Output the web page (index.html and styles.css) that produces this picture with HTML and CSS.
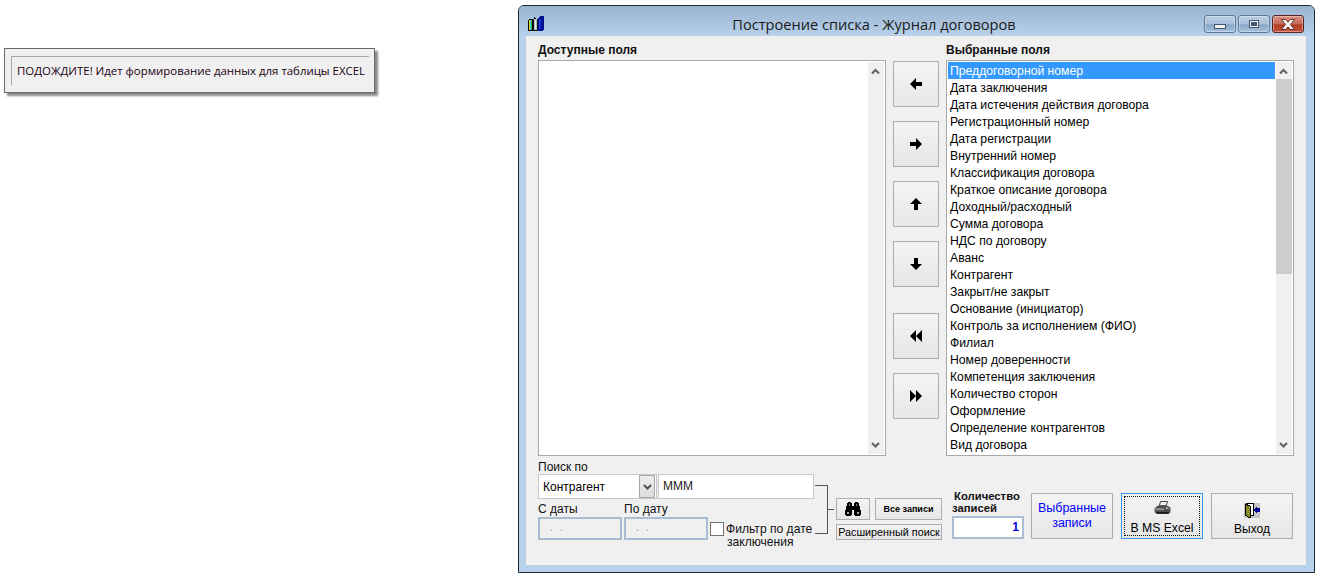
FILE: index.html
```html
<!DOCTYPE html>
<html lang="ru">
<head>
<meta charset="utf-8">
<title>Построение списка</title>
<link rel="stylesheet" href="styles.css">
</head>
<body>
<div class="toast">
  <div class="toast-inner">ПОДОЖДИТЕ! Идет формирование данных для таблицы EXCEL</div>
</div>

<div class="window">
  <div class="titlebar">
    <svg class="app-icon" width="16" height="16" viewBox="0 0 16 16" shape-rendering="crispEdges">
      <path d="M0 4h1V3h4v12H0z" fill="#000"/>
      <rect x="1" y="4" width="1" height="10" fill="#e8e020"/>
      <rect x="2" y="4" width="1" height="10" fill="#30d0e0"/>
      <rect x="3" y="4" width="1" height="10" fill="#40b050"/>
      <path d="M5 3h1V1h1v1h1v1h2v12H5z" fill="#101820"/>
      <rect x="6" y="3" width="3" height="11" fill="#a8b8b8"/>
      <rect x="7" y="4" width="1" height="9" fill="#e8f0f0"/>
      <path d="M10 3l2-3h4v13l-2 2h-4z" fill="#001090"/>
      <rect x="11" y="3" width="2" height="10" fill="#1030d8"/>
    </svg>
    <div class="title">Построение списка - Журнал договоров</div>
    <div class="caption-btns">
      <div class="cap cap-min"><span class="glyph-min"></span></div>
      <div class="cap cap-max"><span class="glyph-max"></span></div>
      <div class="cap cap-close">
        <svg width="16" height="11" viewBox="0 0 16 11"><path d="M1.500.5h4L8 3l2.500-2.500h4L10.500 5.500l4 5h-4L8 8l-2.500 2.500h-4l4-5z" fill="#f4f4f4" stroke="#60302a" stroke-width="1"/></svg>
      </div>
    </div>
  </div>

  <div class="client">
    <div class="lists">
      <div class="col">
        <div class="head">Доступные поля</div>
        <div class="listbox">
          <div class="items"></div>
          <div class="vscroll">
            <svg class="sb-arrow" width="16" height="17" viewBox="0 0 16 17"><path d="M4 11.500 7.500 8l3.500 3.500" fill="none" stroke="#606060" stroke-width="2"/></svg>
            <div class="sb-track"></div>
            <svg class="sb-arrow" width="16" height="17" viewBox="0 0 16 17"><path d="M4 6l3.500 3.500L11 6" fill="none" stroke="#606060" stroke-width="2"/></svg>
          </div>
        </div>
      </div>

      <div class="movers">
        <div class="mv-group">
          <button class="btn mv"><svg width="12" height="12" viewBox="0 0 12 12"><path d="M0 6l6-6v4h6v4H6v4z"/></svg></button>
          <button class="btn mv"><svg width="12" height="12" viewBox="0 0 12 12"><path d="M12 6 6 0v4H0v4h6v4z"/></svg></button>
          <button class="btn mv"><svg width="12" height="12" viewBox="0 0 12 12"><path d="M6 0l6 6H8v6H4V6H0z"/></svg></button>
          <button class="btn mv"><svg width="12" height="12" viewBox="0 0 12 12"><path d="M6 12l6-6H8V0H4v6H0z"/></svg></button>
        </div>
        <div class="mv-group">
          <button class="btn mv"><svg width="12" height="12" viewBox="0 0 12 12"><path d="M0 6l6-6v12zM6 6l6-6v12z"/></svg></button>
          <button class="btn mv"><svg width="12" height="12" viewBox="0 0 12 12"><path d="M6 6 0 0v12zM12 6 6 0v12z"/></svg></button>
        </div>
      </div>

      <div class="col">
        <div class="head">Выбранные поля</div>
        <div class="listbox">
          <div class="items">
            <div class="item sel">Преддоговорной номер</div>
            <div class="item">Дата заключения</div>
            <div class="item">Дата истечения действия договора</div>
            <div class="item">Регистрационный номер</div>
            <div class="item">Дата регистрации</div>
            <div class="item">Внутренний номер</div>
            <div class="item">Классификация договора</div>
            <div class="item">Краткое описание договора</div>
            <div class="item">Доходный/расходный</div>
            <div class="item">Сумма договора</div>
            <div class="item">НДС по договору</div>
            <div class="item">Аванс</div>
            <div class="item">Контрагент</div>
            <div class="item">Закрыт/не закрыт</div>
            <div class="item">Основание (инициатор)</div>
            <div class="item">Контроль за исполнением (ФИО)</div>
            <div class="item">Филиал</div>
            <div class="item">Номер доверенности</div>
            <div class="item">Компетенция заключения</div>
            <div class="item">Количество сторон</div>
            <div class="item">Оформление</div>
            <div class="item">Определение контрагентов</div>
            <div class="item">Вид договора</div>
          </div>
          <div class="vscroll">
            <svg class="sb-arrow" width="16" height="17" viewBox="0 0 16 17"><path d="M4 11.500 7.500 8l3.500 3.500" fill="none" stroke="#606060" stroke-width="2"/></svg>
            <div class="sb-track"><div class="sb-thumb"></div></div>
            <svg class="sb-arrow" width="16" height="17" viewBox="0 0 16 17"><path d="M4 6l3.500 3.500L11 6" fill="none" stroke="#606060" stroke-width="2"/></svg>
          </div>
        </div>
      </div>
    </div>

    <div class="bottom">
      <div class="search">
        <div class="lbl lbl-search">Поиск по</div>
        <div class="search-row">
          <div class="combo">
            <span class="combo-text">Контрагент</span>
            <span class="combo-btn"><svg width="9" height="6" viewBox="0 0 9 6"><path d="M1 1l3.500 3.500L8 1" fill="none" stroke="#505050" stroke-width="2"/></svg></span>
          </div>
          <div class="field">МММ</div>
        </div>
        <div class="date-row">
          <div class="date-col">
            <div class="lbl">С даты</div>
            <div class="date-box">. .</div>
          </div>
          <div class="date-col">
            <div class="lbl">По дату</div>
            <div class="date-box">. .</div>
          </div>
          <div class="filter">
            <span class="check"></span>
            <span class="filter-text">Фильтр по дате<br><span class="filter-l2">заключения</span></span>
          </div>
        </div>
      </div>

      <div class="bracket"></div>

      <div class="find">
        <div class="find-top">
          <button class="btn btn-bino">
            <svg width="16" height="14" viewBox="0 0 16 14" shape-rendering="crispEdges"><path d="M3 0h3v1h1v3h2V1h1V0h3v1h1v3h1v4h1v5h-1v1h-5v-1h-1V8H7v5H6v1H1v-1H0V8h1V4h1V1h1z"/><rect x="2" y="10" width="2" height="2" fill="#aaa"/><rect x="12" y="10" width="2" height="2" fill="#aaa"/><rect x="4" y="2" width="1" height="2" fill="#888"/><rect x="11" y="2" width="1" height="2" fill="#888"/></svg>
          </button>
          <button class="btn btn-all">Все записи</button>
        </div>
        <button class="btn btn-adv">Расширенный поиск</button>
      </div>

      <div class="count">
        <div class="count-lbl"><span class="count-l1">Количество</span><br>записей</div>
        <div class="count-box">1</div>
      </div>

      <button class="btn act act-blue">Выбранные<br>записи</button>
      <button class="btn act act-focus">
        <span class="focus-rect">
          <svg width="17" height="15" viewBox="0 0 17 15"><path d="M5 5 6.500.5 14 .5 12.500 5z" fill="#f6f6f6" stroke="#333" stroke-width="1"/><path d="M3 5h11l3 2v5l-2 2H3l-3-2V8z" fill="#4e4e4e"/><path d="M1 8h9v1.500H1z" fill="#a8a8a8"/><rect x="12" y="7" width="3" height="1.500" fill="#c0c0c0"/><path d="M2 12h13v1.500H2z" fill="#111"/></svg>
          <span>В MS Excel</span>
        </span>
      </button>
      <button class="btn act act-exit">
        <svg width="16" height="15" viewBox="0 0 16 15" shape-rendering="crispEdges"><rect width="16" height="15" fill="#c4c4c4"/><rect x="2.500" y=".5" width="7" height="12" fill="#fff" stroke="#000"/><path d="M1 1l5 2v12l-5-3z" fill="#8a8a24" stroke="#000"/><path d="M9 7l4-4v2h3v4h-3v2z" fill="#000090"/></svg>
        <span>Выход</span>
      </button>
    </div>
  </div>
</div>
</body>
</html>
```

FILE: styles.css
```css
html, body { margin: 0; padding: 0; background: #fff; }
body {
  width: 1317px;
  height: 575px;
  overflow: hidden;
  position: relative;
  font-family: "Liberation Sans", Arial, sans-serif;
  font-size: 12px;
  color: #000;
}
button { font-family: inherit; font-size: 12px; margin: 0; padding: 0; color: inherit; }

.toast {
  position: absolute;
  left: 4px;
  top: 48px;
  width: 371px;
  height: 45px;
  box-sizing: border-box;
  background: #f0f0f0;
  border: 1px solid #6a6a6a;
  box-shadow: 3px 3px 2px #8a8a8a;
  padding: 7px 5px 0 6px;
}
.toast-inner {
  border-top: 1px solid #a8a8a8;
  border-left: 1px solid #a8a8a8;
  height: 29px;
  box-sizing: border-box;
  padding: 6px 0 0 5px;
  font-family: "Open Sans", sans-serif;
  font-size: 11.430px;
  line-height: 16px;
  color: #1a0010;
  white-space: nowrap;
}

.window {
  position: absolute;
  left: 518px;
  top: 5px;
  width: 797px;
  height: 568px;
  box-sizing: border-box;
  border: 1px solid #1a2a30;
  border-radius: 6px 6px 0 0;
  background: #b9d1ea;
  padding: 0 8px 7px 7px;
  display: flex;
  flex-direction: column;
}
.titlebar {
  height: 30px;
  flex: none;
  margin: 0 -8px 0 -7px;
  padding: 0 8px 0 7px;
  border-radius: 5px 5px 0 0;
  background: linear-gradient(#98b4d2, #b9d1ea);
  display: flex;
  align-items: center;
  position: relative;
}
.app-icon { margin-left: 2px; position: relative; top: 3px; }
.title {
  position: absolute;
  left: 0;
  right: 85px;
  top: 8px;
  text-align: center;
  font-family: "Open Sans", sans-serif;
  font-size: 14.600px;
  line-height: 20px;
  color: #1a1a1a;
}
.caption-btns {
  margin-left: auto;
  margin-right: 2px;
  display: flex;
  gap: 2px;
  position: relative;
  top: 3px;
}
.cap {
  width: 32px;
  height: 18px;
  box-sizing: border-box;
  border: 1px solid #5d7897;
  border-radius: 3px;
  display: flex;
  align-items: center;
  justify-content: center;
  box-shadow: inset 0 0 0 1px rgba(255,255,255,.35);
}
.cap-min, .cap-max { background: linear-gradient(#b9cde2 0, #a8c0da 50%, #86a4c4 55%, #a9c3de 100%); }
.cap-close { border-color: #5a2422; background: linear-gradient(#d88f80 0, #c86a58 50%, #b23a24 55%, #c8543c 100%); }
.glyph-min { width: 10px; height: 3px; background: #f4f4f4; border: 1px solid #42586f; margin-top: 5px; }
.glyph-max { width: 8px; height: 6px; border: 1px solid #42586f; box-shadow: inset 0 0 0 1px #f4f4f4; background: #42586f; }

.client {
  flex: 1;
  background: #f0f0f0;
  padding: 6px 12px 0 12px;
  display: flex;
  flex-direction: column;
  min-height: 0;
}
.lists { display: flex; gap: 7px; }
.col { width: 348px; flex: none; }
.head { font-weight: bold; line-height: 14px; height: 18px; padding-top: 1px; box-sizing: border-box; color: #111; }
.listbox {
  height: 396px;
  box-sizing: border-box;
  border: 1px solid #a9a9a9;
  background: #fff;
  display: flex;
  overflow: hidden;
}
.items { flex: 1; padding: 1px 1px 0 1px; min-width: 0; }
.item { height: 17px; line-height: 19px; padding-left: 2px; white-space: nowrap; color: #000; font-size: 12.200px; }
.sel { background: #3399ff; color: #fff; }
.vscroll { width: 16px; flex: none; background: #f0f0f0; display: flex; flex-direction: column; margin: 1px 1px 1px 0; }
.sb-arrow { flex: none; display: block; }
.sb-track { flex: 1; min-height: 0; }
.sb-thumb { height: 195px; background: #cdcdcd; }

.movers { width: 46px; flex: none; padding-top: 19px; display: flex; flex-direction: column; gap: 26px; }
.mv-group { display: flex; flex-direction: column; gap: 14px; }
.btn {
  border: 1px solid #adadad;
  background: linear-gradient(#f4f4f4, #e6e6e6);
  box-sizing: border-box;
  display: flex;
  align-items: center;
  justify-content: center;
}
.mv { width: 46px; height: 46px; }

.bottom { display: flex; align-items: flex-start; position: relative; margin-top: 5px; }
.search { width: 276px; flex: none; }
.lbl { line-height: 13px; height: 13px; color: #111; }
.lbl-search { height: 13px; }
.search-row { display: flex; gap: 1px; }
.combo {
  width: 119px;
  height: 25px;
  box-sizing: border-box;
  border: 1px solid #c8c8c8;
  background: #fff;
  display: flex;
  align-items: center;
  justify-content: space-between;
  padding: 0 1px 0 4px;
}
.combo-text { font-size: 12px; }
.combo-btn {
  width: 16px;
  height: 23px;
  border: 1px solid #a8a8a8;
  background: linear-gradient(#ececec, #dcdcdc);
  box-sizing: border-box;
  display: flex;
  align-items: center;
  justify-content: center;
}
.field {
  width: 156px;
  height: 25px;
  box-sizing: border-box;
  border: 1px solid #c8c8c8;
  background: #fff;
  padding: 4px 0 0 4px;
  line-height: 14px;
  color: #222;
}
.date-row { display: flex; margin-top: 2px; position: relative; }
.date-col { width: 86px; flex: none; }
.date-col .lbl { height: 16px; line-height: 16px; }
.date-box {
  width: 84px;
  height: 23px;
  box-sizing: border-box;
  border: 2px solid #a9bdd3;
  background: #f0f0f0;
  color: #888;
  font-size: 11px;
  word-spacing: 4px;
  padding: 2px 0 0 10px;
}
.filter { display: flex; margin-top: 21px; }
.check { width: 12px; height: 12px; border: 1px solid #707070; background: #fff; flex: none; }
.filter-text { margin-left: 2px; line-height: 13px; padding-top: 1px; white-space: nowrap; color: #111; font-size: 12.100px; }
.filter-l2 { padding-left: 1px; }

.bracket {
  width: 13px;
  height: 49px;
  margin: 24px 0 0 1px;
  flex: none;
  border: 1px solid #555;
  border-left: 0;
  box-sizing: border-box;
  position: relative;
}
.bracket::after {
  content: "";
  position: absolute;
  left: 100%;
  top: 23px;
  width: 7px;
  height: 1px;
  background: #555;
}

.find { margin: 37px 0 0 8px; width: 106px; flex: none; display: flex; flex-direction: column; gap: 4px; }
.find-top { display: flex; gap: 5px; }
.btn-bino { width: 34px; height: 22px; }
.btn-all { width: 67px; height: 22px; font-size: 9px; font-weight: bold; }
.btn-adv { width: 106px; height: 16px; font-size: 10.800px; white-space: nowrap; }

.count { margin: 29px 0 0 10px; width: 72px; flex: none; }
.count-lbl { font-weight: bold; font-size: 11.300px; line-height: 12px; color: #111; }
.count-l1 { padding-left: 2px; }
.count-box {
  height: 23px;
  box-sizing: border-box;
  border: 2px solid #a9bdd3;
  background: #fff;
  margin-top: 2px;
  text-align: right;
  padding-right: 3px;
  font-weight: bold;
  color: #0000e0;
  line-height: 19px;
}

.act {
  width: 82px;
  height: 46px;
  flex: none;
  margin-top: 32px;
  flex-direction: column;
}
.act-blue { margin-left: 7px; color: #0000ff; line-height: 15px; font-size: 12.500px; }
.act-focus { margin-left: 8px; border-color: #3399ff; padding: 2px; }
.act-exit { margin-left: 8px; gap: 4px; padding-top: 6px; }
.focus-rect {
  width: 100%;
  height: 100%;
  box-sizing: border-box;
  border: 1px dotted #111;
  display: flex;
  flex-direction: column;
  align-items: center;
  gap: 6px;
  padding-top: 4px;
  font-size: 12.200px;
}
```
